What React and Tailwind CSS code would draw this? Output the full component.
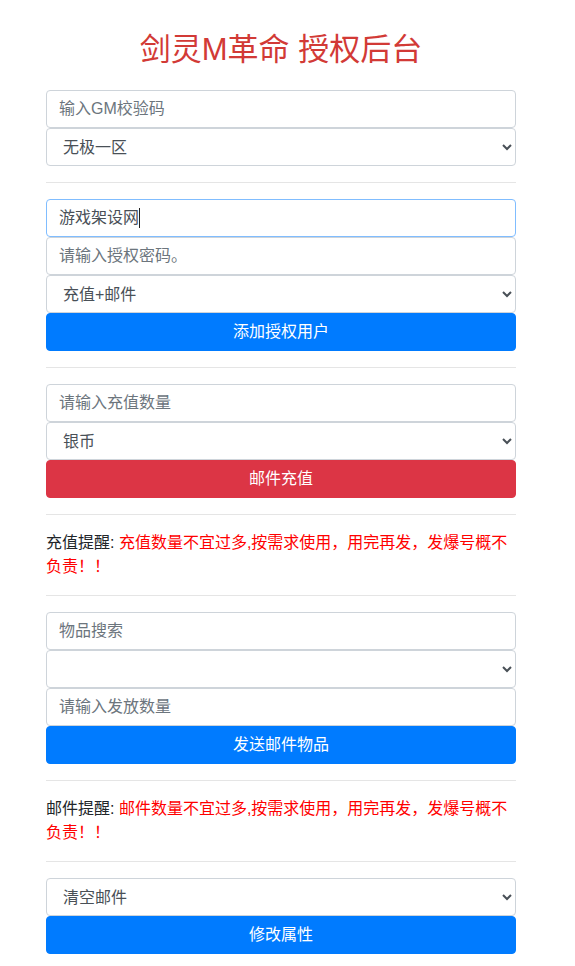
import React from 'react';

const inputCls =
  'block w-full h-[38px] px-3 text-base text-[#495057] bg-white border border-[#ced4da] rounded placeholder:text-[#6c757d] outline-none';

const selectCls =
  'block w-full h-[38px] pl-3 pr-1 text-base text-[#495057] bg-white border border-[#ced4da] rounded outline-none';

const Divider = () => <hr className="my-4 border-0 border-t border-black/10" />;

const Btn = ({ color = 'blue', children }) => (
  <button
    className={
      color === 'red'
        ? 'block w-full h-[38px] text-base text-white bg-[#dc3545] border border-[#dc3545] rounded'
        : 'block w-full h-[38px] text-base text-white bg-[#007bff] border border-[#007bff] rounded'
    }
  >
    {children}
  </button>
);

const Notice = ({ label, text }) => (
  <p className="text-base leading-6 text-[#212529]">
    {label}: <span className="text-[#ff0000]">{text}</span>
  </p>
);

export default function App() {
  return (
    <div className="min-h-screen bg-white font-['Liberation_Sans','Noto_Sans_CJK_SC',sans-serif]">
      <div className="ml-[46px] w-[470px] pt-[31px] pb-6">
        <h2 className="h-[38px] leading-[38px] text-[31px] text-center text-[#d23a36] mb-[21px]">
          剑灵M革命 授权后台
        </h2>

        {/* 区服 */}
        <input className={inputCls} placeholder="输入GM校验码" />
        <select className={selectCls} defaultValue="1">
          <option value="1">无极一区</option>
        </select>

        <Divider />

        {/* 授权 */}
        <div className="flex items-center w-full h-[38px] px-3 text-base text-[#495057] bg-white border border-[#80bdff] rounded">
          游戏架设网<span className="inline-block w-px h-[20px] bg-[#222]" />
        </div>
        <input className={inputCls} placeholder="请输入授权密码。" />
        <select className={selectCls} defaultValue="1">
          <option value="1">充值+邮件</option>
        </select>
        <Btn>添加授权用户</Btn>

        <Divider />

        {/* 充值 */}
        <input className={inputCls} placeholder="请输入充值数量" />
        <select className={selectCls} defaultValue="1">
          <option value="1">银币</option>
        </select>
        <Btn color="red">邮件充值</Btn>

        <Divider />
        <Notice label="充值提醒" text="充值数量不宜过多,按需求使用，用完再发，发爆号概不负责！！" />
        <Divider />

        {/* 物品 */}
        <input className={inputCls} placeholder="物品搜索" />
        <select className={selectCls} defaultValue="">
          <option value=""></option>
        </select>
        <input className={inputCls} placeholder="请输入发放数量" />
        <Btn>发送邮件物品</Btn>

        <Divider />
        <Notice label="邮件提醒" text="邮件数量不宜过多,按需求使用，用完再发，发爆号概不负责！！" />
        <Divider />

        <select className={selectCls} defaultValue="1">
          <option value="1">清空邮件</option>
        </select>
        <Btn>修改属性</Btn>
      </div>
    </div>
  );
}
